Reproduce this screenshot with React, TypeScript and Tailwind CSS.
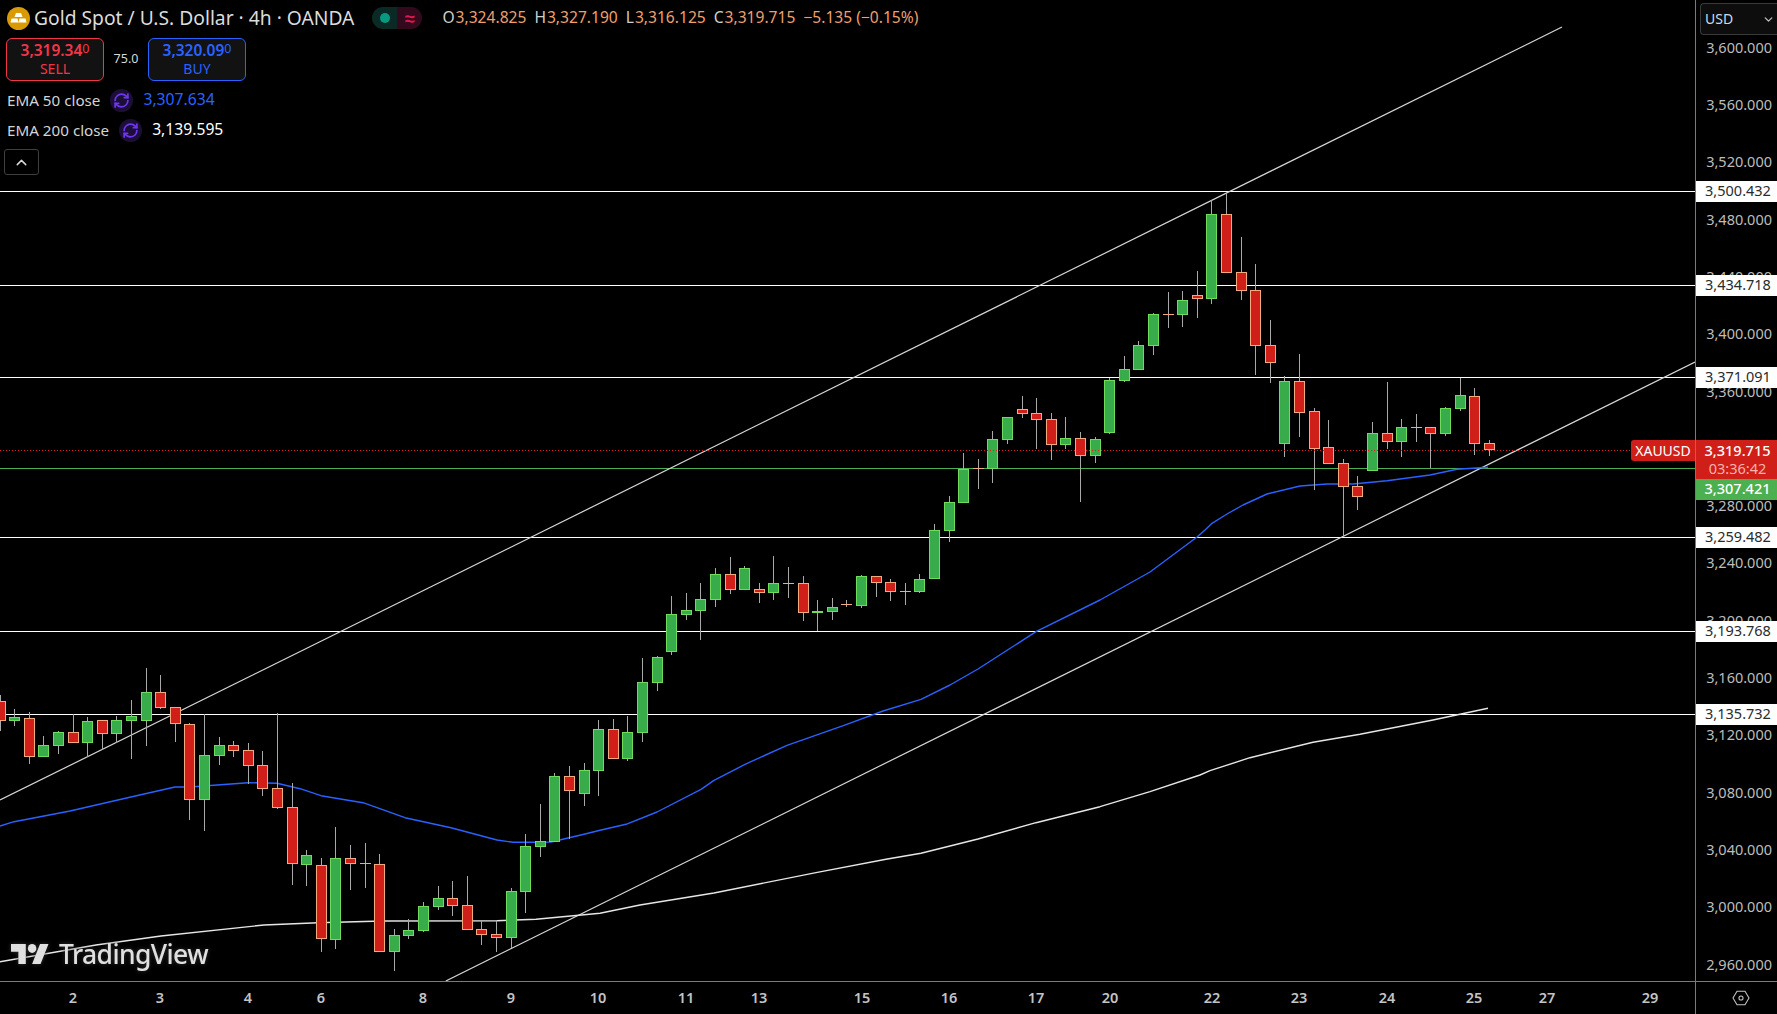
import React from "react";
import { RefreshCw, ChevronUp, ChevronDown } from "lucide-react";

type Group = { off: number; rows: string };
const groups: Group[] = [
  { off: 640, rows: `r 165 184 244 272
g 208 232 244 257
r 216 235 350 372
g 289 316 350 350
g 273 277 317 342
r 222 277 308 308
g 232 244 308 350
r 241 241 281 330
g 228 241 281 308
g 180 229 242 356
g 84 157 242 318
r 105 157 203 206
r 202 202 253 306
r 249 253 479 540
g 222 346 479 573
g 292 316 347 375
r 304 316 332 351
r 309 331 377 432
r 334 376 446 468
r 220 445 503 507` },
  { off: 660, rows: `r 370 442 613 675
g 571 586 614 678
r 595 616 838 876
g 502 595 839 867
r 556 595 611 690
r 549 609 611 684
r 582 613 875 875
g 808 826 875 933
g 778 811 827 837
g 727 739 812 815
g 679 715 740 750
r 663 715 737 768
r 648 736 809 811
r 781 808 824 855
r 784 823 833 876
g 685 694 833 863` },
  { off: 440, rows: `g 1182 1218 1355 1418
g 1092 1204 1220 1250
g 1000 1008 1205 1205
r 978 1009 1052 1196
g 969 991 1061 1097
g 840 868 992 1067
r 838 868 956 956
g 828 877 956 962
g 655 727 878 905
g 648 652 728 752
g 468 523 635 644
g 460 511 524 540
g 430 478 512 600
g 385 403 479 500
r 351 403 449 461
g 379 385 449 450
r 430 448 458 488
g 348 430 458 480
r 381 430 432 473
r 408 430 518 543
g 480 514 518 574
g 475 502 515 540
r 480 493 495 500
g 405 409 497 503
r 409 409 428 470
r 418 427 455 483
r 430 454 456 495
g 403 418 456 459
g 252 271 416 416
g 168 187 272 306
g 39 88 188 188
r 57 84 86 147` },
  { off: 280, rows: `g 453 478 566 609
g 411 412 479 491
r 348 388 401 414
r 354 400 419 507
r 399 418 494 540
g 411 475 494 507
r 457 475 527 666
g 472 478 527 548` },
  { off: 180, rows: `g 594 601 758 762
g 529 568 602 605
g 484 496 569 570
g 400 403 497 525
r 336 402 404 444
g 334 361 404 441
r 273 346 356 414
g 60 103 356 372
r 38 103 278 278
r 171 277 332 360
r 252 331 497 585
r 420 496 548 609
g 589 604 791 830
r 522 604 698 770
r 685 694 806 930
r 720 802 851 851
r 838 850 920 1071
r 888 919 950 990
g 727 760 872 872
r 607 760 785 807
g 717 742 785 830
r 702 741 743 786
r 742 742 761 865
g 680 685 761 768
g 593 646 686 692
r 625 649 791 825
r 781 790 811 828` },
];

const candles = groups.flatMap((g) =>
  g.rows.split("\n").map((row) => {
    const [t, a, b, c, d] = row.trim().split(" ");
    const y = (v: string) => Math.round(g.off + Number(v) / 3);
    return { up: t === "g", hi: y(a), top: y(b), bot: y(c), lo: y(d) };
  })
);

const ema50 =
  "0,826 14,821.7 44,816 70,811 132,796.7 175,787 190,787 248,782.7 277,783.3 300,788.7 321,795.7 363,802.7 405,817.7 451,827.7 497,840 513,842.3 534,842.3 551,842 584,834.3 600,830.3 626,824.3 657,812 701,789.3 714,780.3 745,764.3 787,745.3 844,725.3 883,711 921,699.3 950,685 978,669 1036,631.7 1100,600 1150,572 1197,537 1205,530 1212,523.3 1227,514 1243,505 1267,494 1300,486 1327,484 1353,484 1387,480.7 1430,475 1457,469.3 1488,467.3";
const ema200 =
  "0,961.7 96,945 161,936 264,925 318,922.7 383,921 497,920.7 536,919.3 600,913.3 640,905 714,893 816,872.6 886,859.3 921,853.3 978,839 1036,822.7 1100,806.7 1150,791.7 1200,775 1210,770.7 1250,757.7 1313,742.3 1360,734.3 1433,720 1488,708.3";

const ticks: string[] = [
  "3,600.000", "3,560.000", "3,520.000", "3,480.000", "3,440.000", "3,400.000", "3,360.000", "3,320.000",
  "3,280.000", "3,240.000", "3,200.000", "3,160.000", "3,120.000", "3,080.000", "3,040.000", "3,000.000", "2,960.000",
];
const levels = [
  { t: "3,500.432", y: 191.7 },
  { t: "3,434.718", y: 285.5 },
  { t: "3,371.091", y: 377.5 },
  { t: "3,259.482", y: 537.5 },
  { t: "3,193.768", y: 631.5 },
  { t: "3,135.732", y: 714.5 },
];
const hLines = [191.5, 285.5, 377.5, 537.5, 631.5, 714.5];
const days: [string, number][] = [
  ["2", 73], ["3", 160], ["4", 248], ["6", 321], ["8", 423], ["9", 511], ["10", 598], ["11", 686], ["13", 759], ["15", 862],
  ["16", 949], ["17", 1036], ["20", 1110], ["22", 1212], ["23", 1299], ["24", 1387], ["25", 1474], ["27", 1547], ["29", 1650],
];

function Chart() {
  return (
    <svg width={1695} height={981} className="block">
      <g shapeRendering="crispEdges">
        {hLines.map((y) => (
          <line key={y} x1={0} x2={1695} y1={y} y2={y} stroke="#ffffff" strokeWidth={1} />
        ))}
        <line x1={0} x2={1695} y1={468.5} y2={468.5} stroke="#4caf50" strokeWidth={1} />
      </g>
      <line x1={0} y1={800} x2={1562} y2={27} stroke="#d6d6d6" strokeWidth={1.2} />
      <line x1={445.8} y1={981} x2={1695} y2={362} stroke="#d6d6d6" strokeWidth={1.2} />
      <polyline points={ema50} fill="none" stroke="#2962ff" strokeWidth={1.4} strokeLinejoin="round" />
      <polyline points={ema200} fill="none" stroke="#e6e6e6" strokeWidth={1.4} strokeLinejoin="round" />
      <g shapeRendering="crispEdges">
        {candles.map((c, i) => {
          const xc = Math.floor(14.6 * i) + 0.5;
          const doji = c.bot - c.top <= 1;
          return (
            <g key={i}>
              <line x1={xc} x2={xc} y1={c.hi} y2={c.lo} stroke="#a9a9a9" strokeWidth={1} />
              {doji ? (
                <rect x={xc - 5.5} y={c.top} width={11} height={1} fill={c.up ? "#6fdc5c" : "#f5a97f"} />
              ) : (
                <rect
                  x={xc - 5}
                  y={c.top + 0.5}
                  width={10}
                  height={c.bot - c.top - 1}
                  fill={c.up ? "#38ab4a" : "#d01f18"}
                  stroke={c.up ? "#6fdc5c" : "#f5a97f"}
                  strokeWidth={1}
                />
              )}
            </g>
          );
        })}
        <line x1={0} x2={1695} y1={450.5} y2={450.5} stroke="#e02020" strokeWidth={1} strokeDasharray="1 2" />
      </g>
    </svg>
  );
}

function GoldLogo() {
  return (
    <svg width={23} height={23} viewBox="0 0 23 23" className="shrink-0">
      <circle cx={11.5} cy={11.5} r={11.5} fill="#d99a05" />
      <path d="M9 6h5l1.5 4h-8zM4.5 11.5h6l1 4h-8zM12.5 11.5h6l1 4h-8z" fill="#ffffff" />
    </svg>
  );
}

function Sync() {
  return (
    <span className="flex h-[23px] w-[23px] items-center justify-center rounded-full bg-[#1b0f38]">
      <RefreshCw size={17} strokeWidth={2.4} color="#6f35f0" />
    </span>
  );
}

function OH({ l, v }: { l: string; v: string }) {
  return (
    <span className="flex">
      <span className="mr-[1px] text-[#cfcfcf]">{l}</span>
      <span className="text-[#ef9f6e]">{v}</span>
    </span>
  );
}

function Trade({ price, tail, label, cls }: { price: string; tail: string; label: string; cls: string }) {
  return (
    <div className={`flex h-[43px] w-[98px] flex-col items-center justify-center rounded-[6px] border bg-[#121212] ${cls}`}>
      <div className="flex items-start text-[15.5px] font-semibold leading-[19px]">
        <span>{price}</span>
        <span className="text-[12.5px] font-normal leading-[15px]">{tail}</span>
      </div>
      <div className="mb-[1px] text-[14px] leading-[17px]">{label}</div>
    </div>
  );
}

function Legend() {
  return (
    <div className="absolute left-0 top-0 flex flex-col items-start">
      <div className="flex h-[36px] items-center pl-[7px]">
        <GoldLogo />
        <span className="ml-[4px] whitespace-nowrap text-[19.25px] text-[#dcdcdc]">Gold Spot / U.S. Dollar · 4h · OANDA</span>
        <div className="ml-[18px] flex h-[22px] w-[50px] overflow-hidden rounded-full">
          <span className="flex w-[25px] items-center justify-center bg-[#0b2a25]">
            <span className="h-[10px] w-[10px] rounded-full bg-[#089981]" />
          </span>
          <span className="flex h-full w-[25px] items-center justify-center bg-[#33091e] text-[18px] font-bold leading-[22px] text-[#e0174f]">≈</span>
        </div>
        <div className="ml-[20px] flex gap-[8px] whitespace-nowrap text-[15.6px]">
          <OH l="O" v="3,324.825" />
          <OH l="H" v="3,327.190" />
          <OH l="L" v="3,316.125" />
          <OH l="C" v="3,319.715" />
          <span className="text-[#ef9f6e]">−5.135 (−0.15%)</span>
        </div>
      </div>
      <div className="mt-[2px] flex items-center pl-[6px]">
        <Trade price="3,319.34" tail="0" label="SELL" cls="border-[#f23645] text-[#f23645]" />
        <span className="w-[44px] text-center text-[12.5px] text-[#d8d8d8]">75.0</span>
        <Trade price="3,320.09" tail="0" label="BUY" cls="border-[#2962ff] text-[#2962ff]" />
      </div>
      <div className="mt-[4px] flex h-[30px] items-center pl-[7px] text-[15.2px] text-[#d4d4d4]">
        <span>EMA 50 close</span>
        <span className="ml-[10px]"><Sync /></span>
        <span className="ml-[10px] text-[15.7px] text-[#2962ff]">3,307.634</span>
      </div>
      <div className="flex h-[30px] items-center pl-[7px] text-[15.2px] text-[#d4d4d4]">
        <span>EMA 200 close</span>
        <span className="ml-[10px]"><Sync /></span>
        <span className="ml-[10px] text-[15.7px] text-white">3,139.595</span>
      </div>
      <button className="ml-[4px] mt-[4px] flex h-[26px] w-[35px] items-center justify-center rounded-[3px] border border-[#3f3f3f] text-[#d8d8d8]">
        <ChevronUp size={17} strokeWidth={2} />
      </button>
    </div>
  );
}

function Watermark() {
  return (
    <div className="absolute left-[11px] top-[939px] flex items-center gap-[10px] text-[#e0e0e0] drop-shadow-[0_0_2px_#333333]">
      <svg width={38} height={20} viewBox="0 4 36 18" fill="#e0e0e0" preserveAspectRatio="none">
        <path d="M14 22H7V11H0V4h14v18zM28 22h-8l7.5-18h8L28 22z" />
        <circle cx={20} cy={8} r={4} />
      </svg>
      <span className="text-[26.5px] font-medium leading-[30px] tracking-[-0.6px]">TradingView</span>
    </div>
  );
}

function PriceAxis() {
  const tag = "absolute left-0 flex w-full items-center justify-center";
  return (
    <div className="relative h-full w-[82px] border-l border-[#7a7a7a] text-[14.5px] leading-none">
      {ticks.map((t, i) => (
        <span
          key={t}
          className="absolute right-[5px] -translate-y-1/2 text-[#bdbdbd]"
          style={{ top: 46.7 + i * 57.3 }}
        >
          {t}
        </span>
      ))}
      {levels.map((l) => (
        <div key={l.t} className={`${tag} h-[21px] bg-white pb-[2px] pl-[3px] text-[#2b2b2b]`} style={{ top: l.y - 10.5 }}>
          {l.t}
        </div>
      ))}
      <div className={`${tag} top-[440px] h-[39px] flex-col bg-[#d01f18] pb-[3px] pl-[2px] text-white`}>
        <span className="font-medium leading-[19px]">3,319.715</span>
        <span className="leading-[16px] text-[#f6b3ad]">03:36:42</span>
      </div>
      <div className={`${tag} top-[479px] h-[21px] bg-[#4caf50] pb-[2px] pl-[2px] font-medium text-white`}>3,307.421</div>
      <div className="absolute left-0 right-0 top-[3px] ml-[4px] flex h-[32px] items-center justify-between rounded-l-[4px] border border-r-0 border-[#3a3a3a] bg-[#0d0d0d] pl-[4px] pr-[2px] text-[14px] text-[#c8dcec]">
        <span>USD</span>
        <ChevronDown size={13} strokeWidth={2.5} color="#bdbdbd" />
      </div>
    </div>
  );
}

export default function App() {
  return (
    <div className="flex h-[1014px] w-[1777px] flex-col overflow-hidden bg-black [font-family:'Noto_Sans',sans-serif]">
      <div className="flex h-[981px]">
        <div className="relative w-[1695px]">
          <Chart />
          <Legend />
          <Watermark />
          <div className="absolute left-[1631px] top-[440px] flex h-[21px] w-[64px] items-center justify-center rounded-l-[3px] bg-[#d01f18] text-[14px] text-white">
            XAUUSD
          </div>
        </div>
        <PriceAxis />
      </div>
      <div className="flex h-[33px] border-t border-[#7a7a7a]">
        <div className="relative w-[1695px] text-[14.5px] font-semibold text-[#c4c4c4]">
          {days.map(([d, x]) => (
            <span key={d} className="absolute top-1/2 -translate-x-1/2 -translate-y-1/2" style={{ left: x }}>
              {d}
            </span>
          ))}
        </div>
        <div className="flex w-[82px] items-center justify-center border-l border-[#7a7a7a] pl-[8px]">
          <svg width={18} height={16} viewBox="0 0 20 18" fill="none" stroke="#c4c4c4" strokeWidth={1.2}>
            <path d="M5.5 1.5h9L19 9l-4.5 7.5h-9L1 9z" />
            <circle cx={10} cy={9} r={2.3} />
          </svg>
        </div>
      </div>
    </div>
  );
}
